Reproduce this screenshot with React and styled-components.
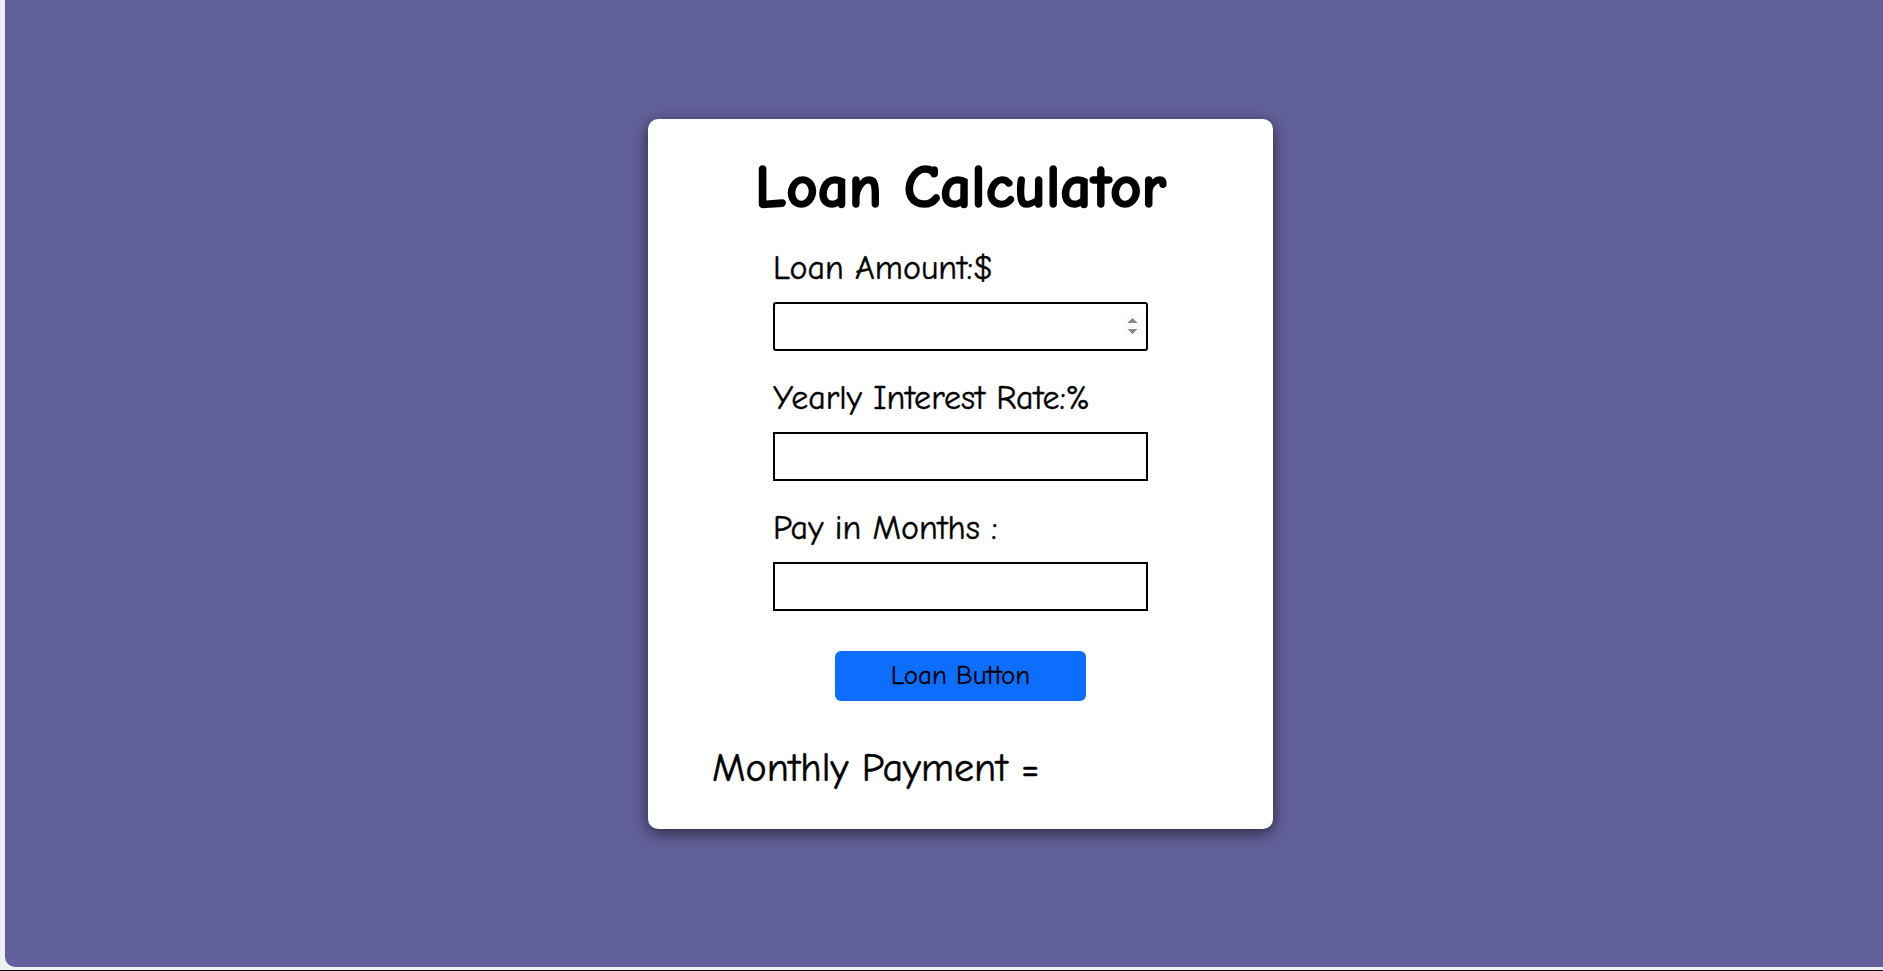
import React from 'react'
import styled, { createGlobalStyle } from 'styled-components'

const GlobalStyle = createGlobalStyle`
body {
  margin: 0;
  background-color: #f0f0f0;
  font-family: "Comic Sans MS", "Comic Neue", Lato, "Open Sans", sans-serif;
  overflow: hidden;
}
`

const Screen = styled.div`
margin-left: 5px;
height: 967px;
background-color: #62609a;
border-bottom-left-radius: 10px;
display: flex;
justify-content: center;
align-items: flex-start;
padding: 119px 0 0 33px;
box-sizing: border-box;
`

const BottomLine = styled.div`
margin-top: 3px;
height: 1px;
background-color: #111;
`

const Card = styled.div`
width: 625px;
box-sizing: border-box;
padding: 32px 64px 37px;
background-color: #fff;
border-radius: 10px;
box-shadow: 0 4px 16px rgba(0, 0, 0, 0.6);
display: flex;
flex-direction: column;
`

const Title = styled.h1`
margin: 0 0 24px;
text-align: center;
font-size: 61px;
font-weight: 700;
line-height: 1.2;
color: #000;
-webkit-text-stroke: 1.6px #000;
`

const Form = styled.form`
align-self: center;
width: 375px;
display: flex;
flex-direction: column;
gap: 27px;
`

const Field = styled.div`
display: flex;
flex-direction: column;
gap: 13px;
`

const Label = styled.label`
font-size: 34px;
line-height: 1.2;
color: #000;
-webkit-text-stroke: 0.4px #000;
`

const Input = styled.input`
height: 49px;
box-sizing: border-box;
border: 2px solid #000;
border-radius: ${({ $focused }) => ($focused ? '3px' : '0')};
padding: 0 6px;
font-size: 20px;
font-family: inherit;
outline: none;
background: #fff;
`

const Button = styled.button`
align-self: center;
margin-top: 13px;
width: 251px;
height: 50px;
border: none;
border-radius: 6px;
background-color: #0d6efd;
color: #000;
font-family: inherit;
font-size: 27px;
-webkit-text-stroke: 0.3px #000;
cursor: pointer;
`

const Result = styled.h2`
margin: 43px 0 0;
font-size: 40px;
font-weight: 400;
line-height: 1.2;
color: #000;
-webkit-text-stroke: 0.5px #000;
`

const App = () => {
  return (
    <>
      <GlobalStyle />
      <Screen>
        <Card>
          <Title>Loan Calculator</Title>
          <Form onSubmit={(e) => e.preventDefault()}>
            <Field>
              <Label htmlFor="amount">Loan Amount:$</Label>
              <Input id="amount" type="number" $focused autoFocus />
            </Field>
            <Field>
              <Label htmlFor="rate">Yearly Interest Rate:%</Label>
              <Input id="rate" type="text" />
            </Field>
            <Field>
              <Label htmlFor="months">Pay in Months :</Label>
              <Input id="months" type="text" />
            </Field>
            <Button type="submit">Loan Button</Button>
          </Form>
          <Result>Monthly Payment = </Result>
        </Card>
      </Screen>
      <BottomLine />
    </>
  )
}

export default App
